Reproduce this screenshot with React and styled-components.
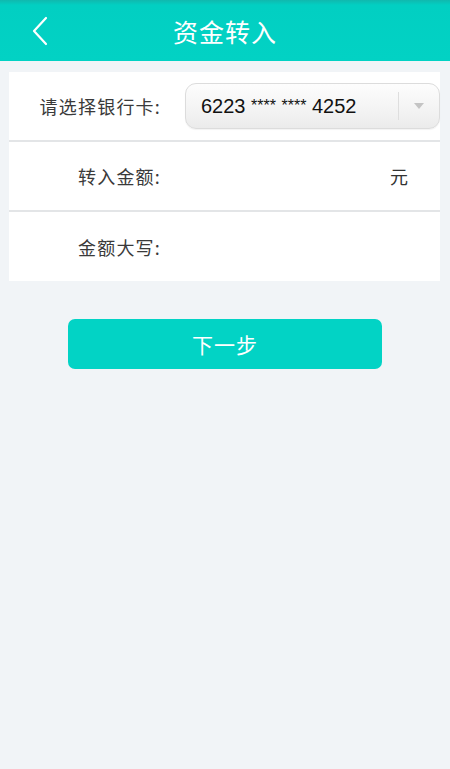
import React from 'react'
import styled, { createGlobalStyle } from 'styled-components'

const GlobalStyle = createGlobalStyle`
  html, body {
    margin: 0;
    padding: 0;
    background: #f1f4f7;
  }
  body {
    font-family: "Noto Sans CJK SC", "Noto Sans", sans-serif;
  }
`;

const Page = styled.div`
  width: 450px;
  min-height: 769px;
  background: #f1f4f7;
`;

const Header = styled.header`
  height: 61px;
  display: flex;
  align-items: center;
  justify-content: center;
  position: relative;
  background: linear-gradient(to bottom, #10b8ae 0px, #02cfc2 5px, #02d2c4 100%);
`;

const BackButton = styled.button`
  position: absolute;
  left: 28px;
  top: 14px;
  width: 24px;
  height: 34px;
  padding: 0;
  border: none;
  background: none;
  display: flex;
  align-items: center;
  justify-content: center;
`;

const Title = styled.h1`
  margin: 0;
  font-size: 25px;
  font-weight: 400;
  color: #fff;
  letter-spacing: 1px;
  font-family: "Noto Sans CJK SC", sans-serif;
`;

const Card = styled.section`
  margin: 11px 10px 0 9px;
  background: #fff;
`;

const Row = styled.div`
  box-sizing: border-box;
  height: 70px;
  display: flex;
  align-items: center;
  border-bottom: 2px solid #e3e5e7;

  &:last-child {
    border-bottom: none;
    height: 69px;
  }
`;

const Label = styled.span`
  width: 152px;
  flex-shrink: 0;
  text-align: right;
  font-size: 18px;
  color: #3a3a3a;
  font-family: "Noto Sans CJK SC", sans-serif;
  letter-spacing: 1.2px;
`;

const Select = styled.div`
  margin-left: 24px;
  flex: 1;
  height: 44px;
  display: flex;
  align-items: center;
  border: 1px solid #dcdcdc;
  border-radius: 11px;
  background: linear-gradient(to bottom, #fdfdfd 0%, #f3f3f3 60%, #ebebeb 100%);
  box-shadow: 0 1px 1px rgba(0, 0, 0, 0.05);
`;

const SelectValue = styled.span`
  flex: 1;
  padding-left: 15px;
  font-family: "Liberation Sans", Arial, sans-serif;
  font-size: 20px;
  color: #111;
`;

const Stars = styled.span`
  font-size: 16px;
  vertical-align: 2px;
`;

const SelectArrow = styled.span`
  width: 40px;
  height: 28px;
  display: flex;
  align-items: center;
  justify-content: center;
  border-left: 1px solid #dedede;
`;

const Unit = styled.span`
  margin-left: auto;
  margin-right: 32px;
  font-size: 18px;
  color: #333;
`;

const NextButton = styled.button`
  display: flex;
  align-items: center;
  justify-content: center;
  width: 314px;
  height: 50px;
  margin: 38px auto 0 68px;
  border: none;
  border-radius: 7px;
  background: #02d3c5;
  color: #fff;
  font-size: 21px;
  font-family: "Noto Sans CJK SC", sans-serif;
  letter-spacing: 1px;
`;

export default function App() {
  return (
    <Page>
      <GlobalStyle />
      <Header>
        <BackButton aria-label="返回">
          <svg width="16" height="30" viewBox="0 0 16 30">
            <path d="M14 2 L2 15 L14 28" fill="none" stroke="#fff" strokeWidth="2.2" strokeLinecap="round" strokeLinejoin="round" />
          </svg>
        </BackButton>
        <Title>资金转入</Title>
      </Header>
      <Card>
        <Row>
          <Label>请选择银行卡:</Label>
          <Select>
            <SelectValue>
              6223 <Stars>****</Stars> <Stars>****</Stars> 4252
            </SelectValue>
            <SelectArrow>
              <svg width="12" height="8" viewBox="0 0 12 8">
                <path d="M1 1 L11 1 L6 7 Z" fill="#c4c4c4" />
              </svg>
            </SelectArrow>
          </Select>
        </Row>
        <Row>
          <Label>转入金额:</Label>
          <Unit>元</Unit>
        </Row>
        <Row>
          <Label>金额大写:</Label>
        </Row>
      </Card>
      <NextButton>下一步</NextButton>
    </Page>
  )
}
